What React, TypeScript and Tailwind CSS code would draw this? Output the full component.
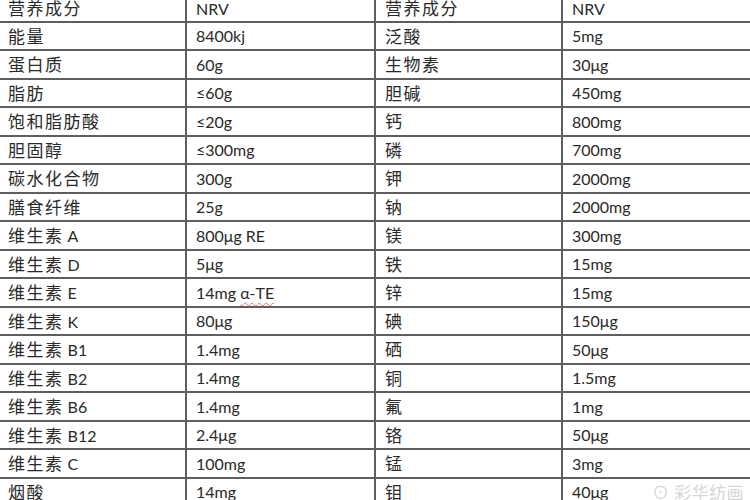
import React from "react";

const rows: [string, React.ReactNode, string, string][] = [
  ["营养成分", "NRV", "营养成分", "NRV"],
  ["能量", "8400kj", "泛酸", "5mg"],
  ["蛋白质", "60g", "生物素", "30μg"],
  ["脂肪", "≤60g", "胆碱", "450mg"],
  ["饱和脂肪酸", "≤20g", "钙", "800mg"],
  ["胆固醇", "≤300mg", "磷", "700mg"],
  ["碳水化合物", "300g", "钾", "2000mg"],
  ["膳食纤维", "25g", "钠", "2000mg"],
  ["维生素 A", "800μg RE", "镁", "300mg"],
  ["维生素 D", "5μg", "铁", "15mg"],
  [
    "维生素 E",
    <>
      14mg{" "}
      <span className="underline decoration-wavy decoration-[#e07a7a] decoration-1 underline-offset-[3px]">α-TE</span>
    </>,
    "锌",
    "15mg",
  ],
  ["维生素 K", "80μg", "碘", "150μg"],
  ["维生素 B1", "1.4mg", "硒", "50μg"],
  ["维生素 B2", "1.4mg", "铜", "1.5mg"],
  ["维生素 B6", "1.4mg", "氟", "1mg"],
  ["维生素 B12", "2.4μg", "铬", "50μg"],
  ["维生素 C", "100mg", "锰", "3mg"],
  ["烟酸", "14mg", "钼", "40μg"],
];

const font = { fontFamily: '"Lato", "Noto Sans CJK SC", sans-serif' };

// CJK runs are set a bit larger and wider than the latin text, like the source sheet
function Label({ text }: { text: React.ReactNode }) {
  if (typeof text !== "string") return <>{text}</>;
  const parts = text.split(/([\u4e00-\u9fff]+)/).filter(Boolean);
  return (
    <>
      {parts.map((p, i) =>
        /[\u4e00-\u9fff]/.test(p) ? (
          <span key={i} className="text-[17px] tracking-[1.5px]">
            {p}
          </span>
        ) : (
          <span key={i}>{p}</span>
        )
      )}
    </>
  );
}

export default function App() {
  return (
    <div className="relative w-[750px] h-[500px] overflow-hidden bg-white text-[#2a2a2a]" style={font}>
      <div className="grid grid-cols-[187px_189px_187px_187px]">
        {rows.map((r, i) => (
          <React.Fragment key={i}>
            {r.map((c, j) => (
              <div
                key={j}
                className={`${i === 0 ? "h-[22.5px] pb-[4px]" : "h-[28.5px]"} flex items-center border-b-2 border-[#5e5e5e] text-[16px] leading-none ${
                  j < 3 ? "border-r-2" : ""
                } ${j === 0 ? "pl-[8px]" : "pl-[9px]"}`}
              >
                <span className="pt-[1px] whitespace-nowrap">
                  <Label text={c} />
                </span>
              </div>
            ))}
          </React.Fragment>
        ))}
      </div>
      <div className="absolute right-[6px] bottom-[-5px] text-[17px] text-[#d6d6d6] tracking-wide">
        ⊙ 彩华纺画
      </div>
    </div>
  );
}
